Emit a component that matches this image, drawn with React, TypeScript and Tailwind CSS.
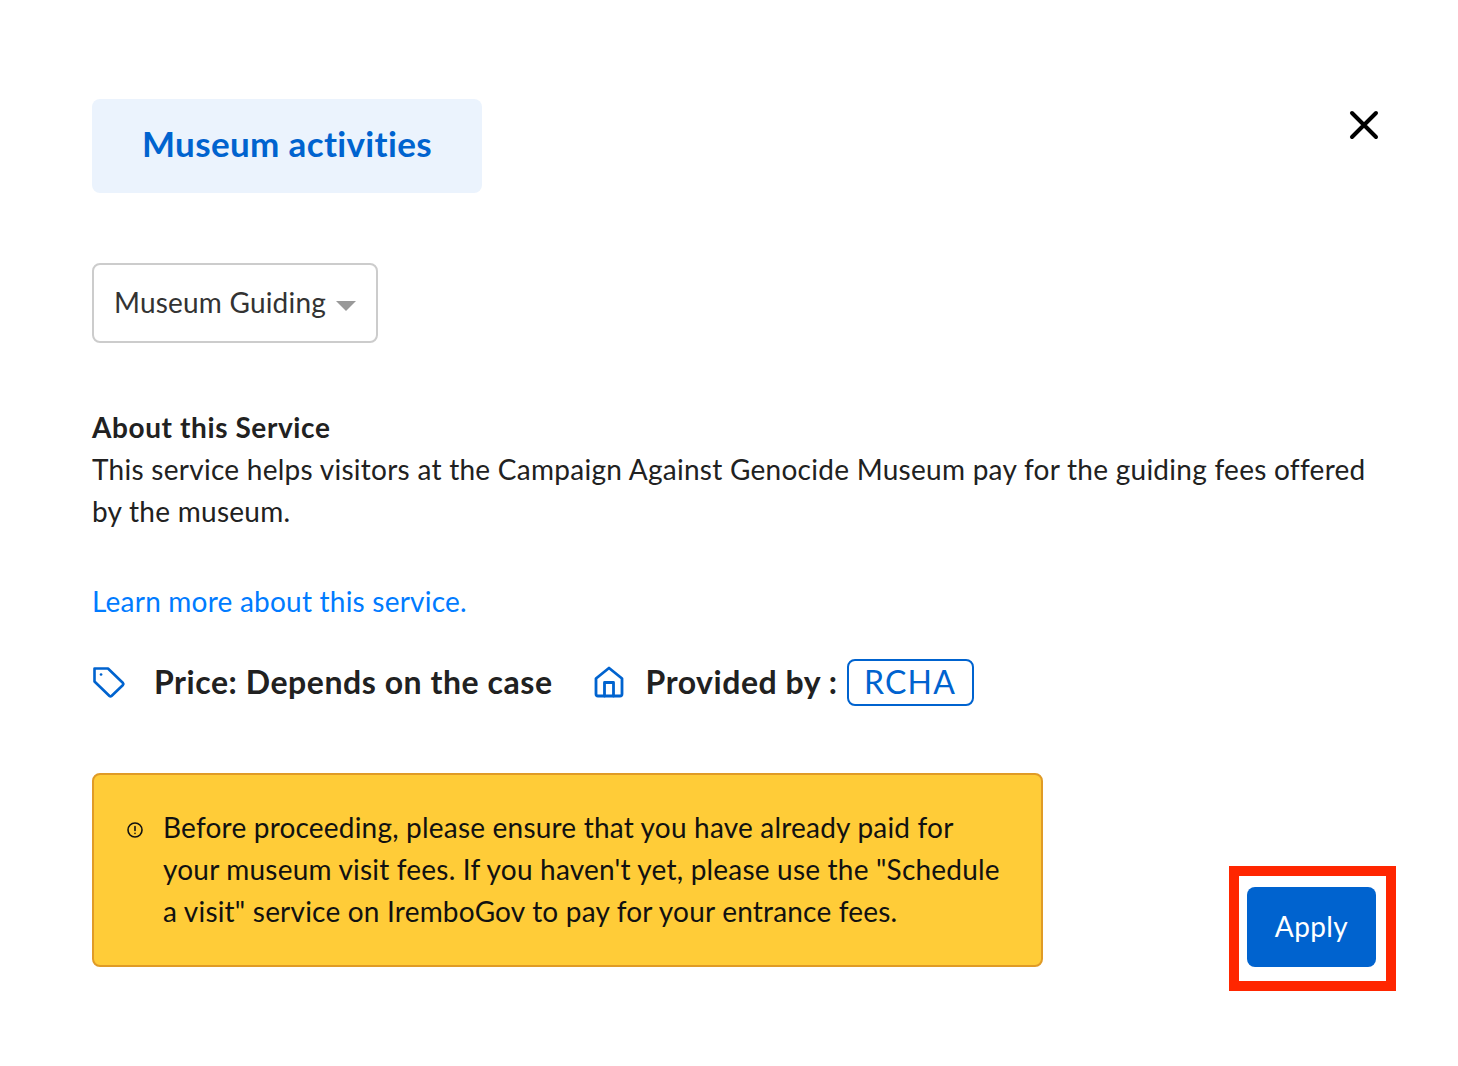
const font = { fontFamily: "Lato, 'Noto Sans', sans-serif" };

function TagIcon() {
  return (
    <svg width="34" height="34" viewBox="0 0 34 34" fill="none" stroke="#0063cf" strokeWidth="2.6" strokeLinejoin="round" strokeLinecap="round">
      <path d="M2.5 3.5 H16 L31 18 a1.5 1.5 0 0 1 0 2 L19.5 31 a1.5 1.5 0 0 1 -2 0 L2.5 16.5 Z" />
      <path d="M9 9.5 h0.1" />
    </svg>
  );
}

function HomeIcon() {
  return (
    <svg width="30" height="32" viewBox="0 0 30 32" fill="none" stroke="#0063cf" strokeWidth="2.8" strokeLinejoin="round" strokeLinecap="round">
      <path d="M2 12.5 L15 2 L28 12.5 V28 a2 2 0 0 1 -2 2 H4 a2 2 0 0 1 -2 -2 Z" />
      <path d="M10.5 30 V16.5 H19.5 V30" />
    </svg>
  );
}

export default function App() {
  return (
    <div className="min-h-[1066px] bg-white pl-[92px] pr-[80px] pt-[99px] text-[28px] leading-[42px] tracking-[0.25px] text-[#212121]" style={font}>
      <div className="flex items-start justify-between">
        <div className="flex h-[94px] w-[390px] items-center justify-center rounded-lg bg-[#ebf3fd] pb-[6px] text-[35px] font-bold tracking-[0.35px] text-[#0063cf]">
          Museum activities
        </div>
        <svg className="-mr-[1px] mt-[11px]" width="30" height="30" viewBox="0 0 30 30" fill="none" stroke="#000" strokeWidth="4" strokeLinecap="round">
          <path d="M3 3 L27 27 M27 3 L3 27" />
        </svg>
      </div>

      <div className="mt-[70px] flex h-[80px] w-[286px] items-center gap-[10px] rounded-lg border-2 border-[#cccccc] pb-[2px] pl-[20px] tracking-[0.2px] text-[#333]">
        Museum Guiding
        <span className="mt-[8px] h-0 w-0 border-x-[10px] border-t-[10px] border-x-transparent border-t-[#999]" />
      </div>

      <div className="mt-[63px]">
        <p className="font-bold tracking-[0.6px]">About this Service</p>
        <p className="tracking-[0.27px]">This service helps visitors at the Campaign Against Genocide Museum pay for the guiding fees offered by the museum.</p>
      </div>

      <p className="mt-[48px] tracking-[0.22px] text-[#007bff]">Learn more about this service.</p>

      <div className="mt-[36px] flex h-[48px] items-center text-[32px] font-bold tracking-[0.55px]">
        <TagIcon />
        <span className="ml-[28px]">Price: Depends on the case</span>
        <span className="ml-[41px]"><HomeIcon /></span>
        <span className="ml-[22px]">Provided by :</span>
        <span className="ml-[9px] flex h-[47px] w-[127px] items-center justify-center rounded-lg border-2 border-[#0063cf] font-normal tracking-[1.2px] text-[#0063cf]">RCHA</span>
      </div>

      <div className="mt-[67px] flex items-end justify-between">
        <div className="flex h-[194px] w-[951px] items-start rounded-lg border-2 border-[#e09b26] bg-[#ffcc38] pl-[32px] pr-[30px] pt-[31px] text-[#111]">
          <svg className="mt-[15px] shrink-0" width="18" height="18" viewBox="0 0 18 18" fill="none" stroke="#111" strokeWidth="1.6" strokeLinecap="round">
            <circle cx="9" cy="9" r="7" />
            <path d="M9 5.5 V9.5 M9 12.4 V12.5" />
          </svg>
          <p className="ml-[19px] tracking-[0.2px]">
            Before proceeding, please ensure that you have already paid for your museum visit fees. If you haven't yet, please use the "Schedule a visit" service on IremboGov to pay for your entrance fees.
          </p>
        </div>
        <div className="relative mr-[2px]">
          <button className="block h-[80px] w-[129px] rounded-lg bg-[#0063cf] pb-[2px] tracking-[0.4px] text-white">Apply</button>
          <div className="pointer-events-none absolute -bottom-[24px] -left-[18px] -right-[20px] -top-[21px] border-[10px] border-[#ff2600]" />
        </div>
      </div>
    </div>
  );
}
